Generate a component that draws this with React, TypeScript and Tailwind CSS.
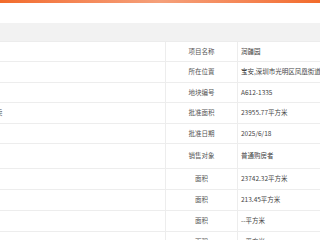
import React from 'react'

type Row = { label: string; value: string; h: string; left?: string }

const rows: Row[] = [
  { label: '项目名称', value: '润疆园', h: 'h-[20px]' },
  { label: '所在位置', value: '宝安,深圳市光明区凤凰街道凤凰社区', h: 'h-[21px]' },
  { label: '地块编号', value: 'A612-1335', h: 'h-[20px]' },
  { label: '批准面积', value: '23955.77平方米', h: 'h-[21px]', left: '卖' },
  { label: '批准日期', value: '2025/6/18', h: 'h-[20px]' },
  { label: '销售对象', value: '普通购房者', h: 'h-[25px]' },
  { label: '面积', value: '23742.32平方米', h: 'h-[21px]' },
  { label: '面积', value: '213.45平方米', h: 'h-[21px]' },
  { label: '面积', value: '--平方米', h: 'h-[21px]' },
  { label: '面积', value: '--平方米', h: 'h-[21px]' },
]

export default function App() {
  return (
    <div
      className="w-[320px] h-[240px] overflow-hidden bg-white text-[6.5px] leading-none"
      style={{ fontFamily: '"Noto Sans CJK SC", "Noto Sans", sans-serif' }}
    >
      <div className="h-[2.5px] bg-gradient-to-r from-[#f26b2a] via-[#f5a07a] to-[#f26b2a]" />
      <div className="h-[20px]" />
      <div className="h-[19px] bg-[#f2f2f2] border-b border-[#ececec]" />
      {rows.map((r, i) => (
        <div key={i} className={`grid grid-cols-[165px_73px_1fr] border-b border-[#ededed] ${r.h}`}>
          <div className="flex items-center overflow-hidden">
            {r.left && <span className="-ml-[4px] text-[#555]">{r.left}</span>}
          </div>
          <div className="flex items-center justify-center border-x border-[#ededed] text-[#555]">
            {r.label}
          </div>
          <div className="flex items-center pl-[3px] whitespace-nowrap overflow-hidden text-[#444]">
            {r.value}
          </div>
        </div>
      ))}
    </div>
  )
}
